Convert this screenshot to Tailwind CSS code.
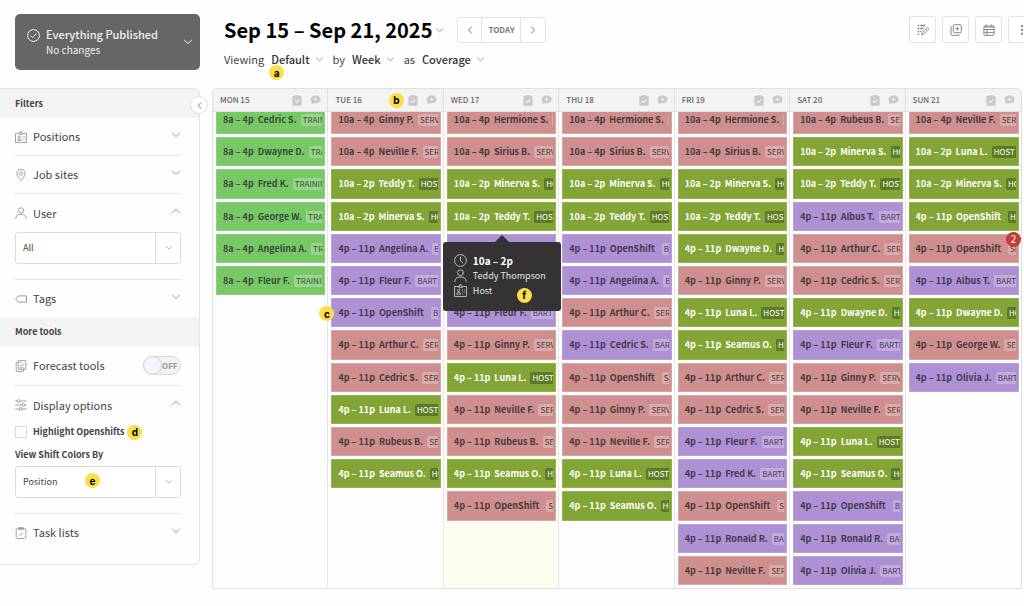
<!DOCTYPE html>
<html lang="en">
<head>
    <meta charset="UTF-8">
    <meta name="viewport" content="width=device-width, initial-scale=1.0">
    <title>Schedule - Coverage</title>
    <script src="https://cdn.jsdelivr.net/npm/@tailwindcss/browser@4"></script>
</head>
<body class="bg-[#fefefe] font-['Noto_Sans_CJK_SC','Open_Sans',sans-serif] text-[#444]">
    <!-- Icons -->
    <svg class="hidden" aria-hidden="true">
        <symbol id="down" viewBox="0 0 8 8"><path d="M.5 2.2 4 5.5l3.500-3.300" fill="none" stroke="currentColor" stroke-linecap="round" stroke-linejoin="round"/></symbol>
        <symbol id="up" viewBox="0 0 8 8"><path d="M.5 5.500 4 2.200l3.500 3.300" fill="none" stroke="currentColor" stroke-linecap="round" stroke-linejoin="round"/></symbol>
        <symbol id="left" viewBox="0 0 8 8"><path d="M5.500.8 2.500 4l3 3.200" fill="none" stroke="currentColor" stroke-linecap="round" stroke-linejoin="round"/></symbol>
        <symbol id="right" viewBox="0 0 8 8"><path d="M2.500.8l3 3.200-3 3.200" fill="none" stroke="currentColor" stroke-linecap="round" stroke-linejoin="round"/></symbol>
        <symbol id="badge" viewBox="0 0 12 12"><g fill="none" stroke="currentColor" stroke-width=".9"><path d="M4.300 2.300H.5v9.200h11V2.300H7.700"/><path d="M4.400 3.400V2h1V.6h1.200V2h1v1.400z"/><circle cx="4.300" cy="6" r="1"/><path d="M2.400 9.400c.2-1.200.9-1.700 1.900-1.700s1.700.5 1.900 1.700zM7.500 5.500h.9M9.200 5.500h.8M7.500 7.400h.9M9.200 7.400h.8M7.500 9.300h.9"/></g></symbol>
        <symbol id="pin" viewBox="0 0 12 12"><g fill="none" stroke="currentColor" stroke-width=".9"><path d="M6 11.600C3.700 8.900 1.900 6.700 1.900 4.500a4.100 4.100 0 0 1 8.200 0c0 2.200-1.800 4.400-4.100 7.100z"/><circle cx="6" cy="4.500" r="1.600"/></g></symbol>
        <symbol id="user" viewBox="0 0 12 12"><g fill="none" stroke="currentColor" stroke-width=".9" stroke-linecap="round"><circle cx="6" cy="3.400" r="2.700"/><path d="M.7 11.500c.2-2.400 1.800-4 4-4h2.600c2.200 0 3.800 1.600 4 4"/></g></symbol>
        <symbol id="tag" viewBox="0 0 12 12"><path d="M.6 6 3.300 2.900h8.200v6.200H3.300z" fill="none" stroke="currentColor" stroke-linejoin="round"/></symbol>
        <symbol id="forecast" viewBox="0 0 12 12"><g fill="none" stroke="currentColor" stroke-width=".9"><path d="M3.300.6h7.500v8.700H3.300zM3.300 2.200H1.200v9.200h7.400V9.300"/><path d="m4.700 6.500 1.600-1.200.9.900 2-2.200M4.700 2.400h2M4.700 7.900h4.500"/></g></symbol>
        <symbol id="sliders" viewBox="0 0 12 12"><g fill="none" stroke="currentColor" stroke-width=".9"><path d="M.3 2h1.600M5 2h6.700M.3 6h6.400M9.800 6h1.900M.3 10h3.900M7.300 10h4.400"/><circle cx="3.500" cy="2" r="1.400"/><circle cx="8.200" cy="6" r="1.400"/><circle cx="5.700" cy="10" r="1.400"/></g></symbol>
        <symbol id="tasks" viewBox="0 0 12 12"><g fill="none" stroke="currentColor" stroke-width=".9"><rect x="1.200" y="1.500" width="9.600" height="10" rx="1.200"/><path d="M3.800 2.700V.6h4.400v2.100zM4.200 7l1.300 1.200 2.300-2.500"/></g></symbol>
        <symbol id="clock" viewBox="0 0 12 12"><g fill="none" stroke="currentColor" stroke-width=".9" stroke-linecap="round"><circle cx="6" cy="6" r="5.500"/><path d="M6 2.700V6.200l2 2"/></g></symbol>
        <symbol id="clip" viewBox="0 0 10 11"><path fill="currentColor" d="M1.300 1.100h1.400V.2h4.600v.9h1.400c.5 0 .9.400.9.900v7.800c0 .5-.4.900-.9.900H1.300a.9.900 0 0 1-.9-.9V2c0-.5.4-.9.900-.9z"/><path d="m3 6 1.600 1.500L7.300 4.700" fill="none" stroke="#f3f3f3" stroke-width="1.100"/></symbol>
        <symbol id="chat" viewBox="0 0 11 10"><path fill="currentColor" d="M5.600.4c2.800 0 5 1.700 5 3.900s-2.200 3.900-5 3.900c-.6 0-1.100-.1-1.600-.2-.8.700-1.900 1.200-3.200 1.300.6-.6 1-1.300 1-2.100C1 6.500.6 5.500.6 4.300.6 2.100 2.800.4 5.600.4z"/><path d="M5.600 2.500v3.600M3.800 4.300h3.600" stroke="#f3f3f3"/></symbol>
    </svg>

    <div class="flex min-h-screen overflow-hidden">
        <aside class="w-[200px] shrink-0 pt-[14px]">
            <button type="button" class="ml-[15px] flex h-14 w-[185px] items-center gap-[6px] rounded-[5px] bg-[#666] pr-2 pl-3 text-left text-[#f2f2f2]">
                <svg class="mb-[14px] size-[13px] shrink-0" viewBox="0 0 13 13" fill="none" stroke="currentColor"><circle cx="6.500" cy="6.500" r="5.900"/><path d="m3.800 6.800 1.900 1.800 3.600-4"/></svg>
                <span class="flex-1">
                    <span class="block text-[11px] leading-4 font-medium">Everything Published</span>
                    <span class="block text-[10px] leading-4">No changes</span>
                </span>
                <svg class="size-2"><use href="#down"/></svg>
            </button>

            <div class="relative mt-[18px] rounded-r-[6px] border border-l-0 border-[#e4e4e8] pb-[13px]">
                <button type="button" aria-label="Collapse filters" class="absolute top-[7px] -right-[9px] z-10 flex size-[18px] items-center justify-center rounded-full border border-[#e2e2e2] bg-white text-[#666]">
                    <svg class="size-[7px]"><use href="#left"/></svg>
                </button>
                <h2 class="flex h-[29px] items-center rounded-tr-[6px] bg-[#f3f3f3] pl-[15px] text-[9px] font-bold">Filters</h2>
                <div class="pr-[18px] pl-[15px]">
                    <button type="button" class="flex h-[38px] w-full items-center gap-[6px] border-b border-[#e6e6e6] pr-px text-[11px]">
                        <svg class="size-3 text-[#999]"><use href="#badge"/></svg>Positions<svg class="mb-1 ml-auto size-2 text-[#999]"><use href="#down"/></svg>
                    </button>
                    <button type="button" class="flex h-[38px] w-full items-center gap-[6px] border-b border-[#e6e6e6] pr-px text-[11px]">
                        <svg class="size-3 text-[#999]"><use href="#pin"/></svg>Job sites<svg class="mb-1 ml-auto size-2 text-[#999]"><use href="#down"/></svg>
                    </button>
                    <button type="button" class="flex h-[38px] w-full items-center gap-[6px] pr-px text-[11px]">
                        <svg class="size-3 text-[#999]"><use href="#user"/></svg>User<svg class="mb-1 ml-auto size-2 text-[#999]"><use href="#up"/></svg>
                    </button>
                    <div class="relative">
                        <select aria-label="User" class="block h-8 w-full appearance-none rounded-[3px] border border-[#dcdce0] bg-white pr-8 pl-[7px] text-[9px]">
                            <option>All</option>
                        </select>
                        <span class="pointer-events-none absolute inset-y-0 right-0 flex w-[26px] items-center justify-center border-l border-[#dcdce0] text-[#999]"><svg class="size-[6px]"><use href="#down"/></svg></span>
                    </div>
                    <button type="button" class="mt-[15px] flex h-[38px] w-full items-center gap-[6px] border-t border-[#e6e6e6] pr-px text-[11px]">
                        <svg class="size-3 text-[#999]"><use href="#tag"/></svg>Tags<svg class="mb-1 ml-auto size-2 text-[#999]"><use href="#down"/></svg>
                    </button>
                </div>
                <h2 class="flex h-[29px] items-center bg-[#f3f3f3] pl-[15px] text-[9px] font-bold">More tools</h2>
                <div class="pr-[18px] pl-[15px]">
                    <label class="flex h-10 items-center gap-[6px] border-b border-[#e6e6e6] text-[11px]">
                        <svg class="size-3 text-[#999]"><use href="#forecast"/></svg>Forecast tools
                        <input type="checkbox" class="peer sr-only">
                        <span class="ml-auto flex h-[19px] w-[38px] items-center rounded-full border border-[#d8d8d8] bg-[#f3f3f3] text-[8px] font-bold text-[#999]"><span class="-ml-px size-[19px] shrink-0 rounded-full border border-[#d4d4d8] bg-[#f5f4fa]"></span>OFF</span>
                    </label>
                    <button type="button" class="flex h-[38px] w-full items-center gap-[6px] pr-px text-[11px]">
                        <svg class="size-3 text-[#999]"><use href="#sliders"/></svg>Display options<svg class="mb-1 ml-auto size-2 text-[#999]"><use href="#up"/></svg>
                    </button>
                    <label class="relative flex h-4 w-fit items-center gap-[6px] text-[9px] font-bold">
                        <input type="checkbox" class="size-3 appearance-none border border-[#dedede] bg-white">Highlight Openshifts
                        <span class="absolute -right-[18px] flex size-[15px] items-center justify-center rounded-full bg-[#fbdf46] font-[Inter] text-[10px] leading-none font-bold text-black">d</span>
                    </label>
                    <label for="colors" class="mt-[7px] block text-[9px] leading-4 font-bold">View Shift Colors By</label>
                    <div class="relative mt-[3px]">
                        <select id="colors" class="block h-8 w-full appearance-none rounded-[3px] border border-[#dcdce0] bg-white pr-8 pl-[7px] text-[9px]">
                            <option>Position</option>
                        </select>
                        <span class="pointer-events-none absolute inset-y-0 right-0 flex w-[26px] items-center justify-center border-l border-[#dcdce0] text-[#999]"><svg class="size-[6px]"><use href="#down"/></svg></span>
                        <span class="absolute top-[7px] left-[70px] flex size-[15px] items-center justify-center rounded-full bg-[#fbdf46] font-[Inter] text-[10px] leading-none font-bold text-black">e</span>
                    </div>
                    <button type="button" class="mt-[15px] flex h-[38px] w-full items-center gap-[6px] border-t border-[#e6e6e6] pr-px text-[11px]">
                        <svg class="size-3 text-[#999]"><use href="#tasks"/></svg>Task lists<svg class="mb-1 ml-auto size-2 text-[#999]"><use href="#down"/></svg>
                    </button>
                </div>
            </div>
        </aside>

        <main class="flex min-w-0 flex-1 flex-col pr-[2px] pb-[17px] pl-3">
            <header class="flex h-[88px] items-start pt-4 pl-3">
                <div>
                    <div class="flex h-7 items-center">
                        <h1 class="text-[20px] leading-7 font-bold text-black">Sep 15 – Sep 21, 2025</h1>
                        <button type="button" aria-label="Choose dates" class="ml-1 text-[#888]"><svg class="size-[7px]"><use href="#down"/></svg></button>
                        <div class="ml-[14px] flex h-[26px] items-stretch divide-x divide-[#e2e2e6] rounded-[3px] border border-[#e2e2e6] bg-white text-[#777]">
                            <button type="button" aria-label="Previous week" class="flex w-6 items-center justify-center"><svg class="size-2"><use href="#left"/></svg></button>
                            <button type="button" class="w-[39px] text-[8px] font-bold">TODAY</button>
                            <button type="button" aria-label="Next week" class="flex w-6 items-center justify-center"><svg class="size-2"><use href="#right"/></svg></button>
                        </div>
                    </div>
                    <div class="mt-[7px] flex items-center text-[11px] leading-4">
                        <span>Viewing</span>
                        <button type="button" class="relative ml-[7px] flex items-center gap-[6px] font-medium text-[#333]">Default<svg class="size-[7px] text-[#888]"><use href="#down"/></svg>
                            <span class="absolute top-[14px] left-[-2px] flex size-[15px] items-center justify-center rounded-full bg-[#fbdf46] font-[Inter] text-[10px] leading-none font-bold text-black">a</span>
                        </button>
                        <span class="ml-[10px]">by</span>
                        <button type="button" class="ml-[7px] flex items-center gap-[6px] font-medium text-[#333]">Week<svg class="size-[7px] text-[#888]"><use href="#down"/></svg></button>
                        <span class="ml-[10px]">as</span>
                        <button type="button" class="ml-[7px] flex items-center gap-[6px] font-medium text-[#333]">Coverage<svg class="size-[7px] text-[#888]"><use href="#down"/></svg></button>
                    </div>
                </div>
                <div class="-mr-[13px] ml-auto flex gap-[6px] text-[#888]">
                    <button type="button" aria-label="Edit shifts" class="flex size-[27px] items-center justify-center rounded-[3px] border border-[#e2e2e8] bg-white">
                        <svg class="size-3" viewBox="0 0 12 12" fill="none" stroke="currentColor"><path d="M.5 1.500h1.800M3.200 1.500h5M.5 4.500h1.800M3.200 4.500h3.300M.5 7.500h1.800M3.200 7.500h1.300M.5 10.300h1.800" stroke-width="1.300"/><path d="m4.700 10.900.6-2.400 4.600-4.700c.9-.8 2.300.6 1.400 1.500l-4.500 4.800z"/></svg>
                    </button>
                    <button type="button" aria-label="Copy shifts" class="flex size-[27px] items-center justify-center rounded-[3px] border border-[#e2e2e8] bg-white">
                        <svg class="size-3" viewBox="0 0 12 12" fill="none" stroke="currentColor"><rect x="3.300" y=".7" width="8" height="8" rx="1.200"/><path d="M7.300 2.900v3.600M5.500 4.700h3.600M1.900 3H1v7.300c0 .6.400 1 1 1h7v-1"/></svg>
                    </button>
                    <button type="button" aria-label="Calendar" class="flex size-[27px] items-center justify-center rounded-[3px] border border-[#e2e2e8] bg-white">
                        <svg class="size-3" viewBox="0 0 12 12" fill="none" stroke="currentColor"><rect x=".9" y="2" width="10.200" height="9.300" rx="1"/><path d="M3.300.4v2.300M8.700.4v2.300M.9 3h10.200M.9 5.500h10.200M.9 8.400h10.200M4 5.500v5.800"/></svg>
                    </button>
                    <button type="button" aria-label="More" class="flex size-[27px] items-center justify-center rounded-[3px] border border-[#e2e2e8] bg-white">
                        <svg class="size-3" viewBox="0 0 12 12" fill="currentColor"><path d="M5 1.200h2v2H5zM5 5h2v2H5zM5 8.800h2v2H5z"/></svg>
                    </button>
                </div>
            </header>

            <section class="flex flex-1 flex-col overflow-hidden rounded-t-[5px] border border-[#e0e0e2]">
                <div id="days" class="z-10 grid h-[22px] shrink-0 grid-cols-7 divide-x divide-[#e0e0e2] bg-[#f3f3f3] shadow-[0_1px_0_#e0e0e2]"></div>
                <div id="shifts" class="grid flex-1 grid-cols-7 divide-x divide-[#e6e6e8]"></div>
            </section>
        </main>
    </div>

    <template id="tooltip">
        <div class="absolute top-10 -left-[4px] z-20 flex w-[118px] flex-col rounded-[3px] bg-[#333] pt-[11px] pb-[13px] pl-[11px] text-[9px] leading-[15px] whitespace-nowrap text-[#e4e4e4]">
            <span class="absolute -top-[7px] left-[51px] border-x-8 border-b-8 border-x-transparent border-b-[#333]"></span>
            <span class="flex items-center gap-[6px] text-[10px] font-bold text-white"><svg class="size-[13px] text-[#bbb]"><use href="#clock"/></svg>10a – 2p</span>
            <span class="flex items-center gap-[6px]"><svg class="size-[13px] text-[#bbb]"><use href="#user"/></svg>Teddy Thompson</span>
            <span class="flex items-center gap-[6px]"><svg class="size-[13px] text-[#bbb]"><use href="#badge"/></svg>Host</span>
            <span class="absolute top-[46px] left-[74px] flex size-[15px] items-center justify-center rounded-full bg-[#fbdf46] font-[Inter] text-[10px] leading-none font-bold text-black">f</span>
        </div>
    </template>

    <script>
        const positions = {
            T: { name: 'TRAINING', bar: 'bg-[#77c966] border-[#8bd07c] text-[#3a4a38]', tag: 'bg-white/25' },
            S: { name: 'SERVER', bar: 'bg-[#cf8f8f] border-[#d9a5a5] text-[#463b3b]', tag: 'bg-white/25' },
            H: { name: 'HOST', bar: 'bg-[#82a535] border-[#93b250] text-white', tag: 'bg-[#5d7a26]' },
            B: { name: 'BARTENDER', bar: 'bg-[#ae90d4] border-[#baa0db] text-[#423b4c]', tag: 'bg-white/25' }
        };

        // Each shift is [time, name, position, extra]
        const A = '8a – 4p', L = '10a – 4p', M = '10a – 2p', D = '4p – 11p';
        const week = [
            { day: 'MON 15', shifts: [[A, 'Cedric S.', 'T'], [A, 'Dwayne D.', 'T'], [A, 'Fred K.', 'T'], [A, 'George W.', 'T'], [A, 'Angelina A.', 'T'], [A, 'Fleur F.', 'T']] },
            { day: 'TUE 16', note: 'b', shifts: [[L, 'Ginny P.', 'S'], [L, 'Neville F.', 'S'], [M, 'Teddy T.', 'H'], [M, 'Minerva S.', 'H'], [D, 'Angelina A.', 'B'], [D, 'Fleur F.', 'B'], [D, 'OpenShift', 'B', 'note'], [D, 'Arthur C.', 'S'], [D, 'Cedric S.', 'S'], [D, 'Luna L.', 'H'], [D, 'Rubeus B.', 'S'], [D, 'Seamus O.', 'H']] },
            { day: 'WED 17', today: true, shifts: [[L, 'Hermione S.', 'S'], [L, 'Sirius B.', 'S'], [M, 'Minerva S.', 'H'], [M, 'Teddy T.', 'H', 'tooltip'], [D, '', 'B'], [D, '', 'B'], [D, 'Fleur F.', 'B'], [D, 'Ginny P.', 'S'], [D, 'Luna L.', 'H'], [D, 'Neville F.', 'S'], [D, 'Rubeus B.', 'S'], [D, 'Seamus O.', 'H'], [D, 'OpenShift', 'S']] },
            { day: 'THU 18', shifts: [[L, 'Hermione S.', 'S'], [L, 'Sirius B.', 'S'], [M, 'Minerva S.', 'H'], [M, 'Teddy T.', 'H'], [D, 'OpenShift', 'B'], [D, 'Angelina A.', 'B'], [D, 'Arthur C.', 'S'], [D, 'Cedric S.', 'B'], [D, 'OpenShift', 'S'], [D, 'Ginny P.', 'S'], [D, 'Neville F.', 'S'], [D, 'Luna L.', 'H'], [D, 'Seamus O.', 'H']] },
            { day: 'FRI 19', shifts: [[L, 'Hermione S.', 'S'], [L, 'Sirius B.', 'S'], [M, 'Minerva S.', 'H'], [M, 'Teddy T.', 'H'], [D, 'Dwayne D.', 'H'], [D, 'Ginny P.', 'S'], [D, 'Luna L.', 'H'], [D, 'Seamus O.', 'H'], [D, 'Arthur C.', 'S'], [D, 'Cedric S.', 'S'], [D, 'Fleur F.', 'B'], [D, 'Fred K.', 'B'], [D, 'OpenShift', 'S'], [D, 'Ronald R.', 'B'], [D, 'Neville F.', 'S']] },
            { day: 'SAT 20', shifts: [[L, 'Rubeus B.', 'S'], [M, 'Minerva S.', 'H'], [M, 'Teddy T.', 'H'], [D, 'Albus T.', 'B'], [D, 'Arthur C.', 'S'], [D, 'Cedric S.', 'S'], [D, 'Dwayne D.', 'H'], [D, 'Fleur F.', 'B'], [D, 'Ginny P.', 'S'], [D, 'Neville F.', 'S'], [D, 'Luna L.', 'H'], [D, 'Seamus O.', 'H'], [D, 'OpenShift', 'B'], [D, 'Ronald R.', 'B'], [D, 'Olivia J.', 'B']] },
            { day: 'SUN 21', shifts: [[L, 'Neville F.', 'S'], [M, 'Luna L.', 'H'], [M, 'Minerva S.', 'H'], [D, 'OpenShift', 'H'], [D, 'OpenShift', 'S', 'count'], [D, 'Albus T.', 'B'], [D, 'Dwayne D.', 'H'], [D, 'George W.', 'S'], [D, 'Olivia J.', 'B']] }
        ];

        const extras = {
            note: '<span class="absolute top-[8px] -left-[12px] z-10 flex size-[15px] items-center justify-center rounded-full bg-[#fbdf46] font-[Inter] text-[10px] leading-none font-bold text-black">c</span>',
            count: '<span class="absolute -top-[2px] -right-[2px] z-10 flex size-[15px] items-center justify-center rounded-full bg-[#c33c36] text-[10px] leading-none text-white">2</span>',
            tooltip: document.getElementById('tooltip').innerHTML
        };

        document.getElementById('days').innerHTML = week.map(d => `
            <div class="relative flex items-center gap-[8px] pr-[6px] pl-[7px] text-[8px] font-medium text-[#666]">
                <span class="flex-1">${d.day}</span>
                ${d.note ? `<span class="absolute right-[39px] flex size-[15px] items-center justify-center rounded-full bg-[#fbdf46] font-[Inter] text-[10px] leading-none font-bold text-black">${d.note}</span>` : ''}
                <svg class="h-[11px] w-[10px] text-[#c9c9c9]"><use href="#clip"/></svg>
                <svg class="h-[10px] w-[11px] text-[#c9c9c9]"><use href="#chat"/></svg>
            </div>`).join('');

        document.getElementById('shifts').innerHTML = week.map(d => `
            <div class="flex min-w-0 flex-col ${d.today ? 'bg-[#fdfdf0]' : ''}">
                <ul class="-mt-[6px] grid flex-1 grid-rows-[repeat(15,minmax(0,1fr))] pr-[2px] pl-[3px]">
                    ${d.shifts.map(([time, name, pos, extra]) => `
                    <li class="relative min-w-0 pb-[3px]">
                        <div class="h-full border pr-[2px] pl-[6px] ${positions[pos].bar}">
                            ${name ? `<div class="flex h-full items-center gap-1 overflow-hidden pt-px text-[9px] leading-4 font-bold whitespace-nowrap">
                                <span>${time}</span>
                                <span class="${name === 'OpenShift' ? 'mr-[3px]' : ''}">${name}</span>
                                <span class="rounded-[2px] px-[2px] text-[8px] leading-3 font-normal ${positions[pos].tag}">${positions[pos].name}</span>
                            </div>` : ''}
                        </div>
                        ${extra ? extras[extra] : ''}
                    </li>`).join('')}
                </ul>
            </div>`).join('');
    </script>
</body>
</html>
